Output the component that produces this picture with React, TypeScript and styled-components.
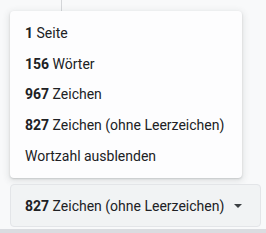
import React from 'react';
import styled, { createGlobalStyle } from 'styled-components';

const GlobalStyle = createGlobalStyle`
  html, body {
    margin: 0;
    padding: 0;
    background: #f8f9fa;
    font-family: Roboto, 'Liberation Sans', sans-serif;
  }
`;

const counts = [
  { num: '1', label: 'Seite' },
  { num: '156', label: 'Wörter' },
  { num: '967', label: 'Zeichen' },
  { num: '827', label: 'Zeichen (ohne Leerzeichen)' },
];

export default function App() {
  return (
    <>
      <GlobalStyle />
      <Page>
        <Divider />
        <Menu>
          {counts.map((c) => (
            <MenuItem key={c.label}>
              <span>
                <Num>{c.num}</Num>
                {' ' + c.label}
              </span>
            </MenuItem>
          ))}
          <MenuItem>
            <span>Wortzahl ausblenden</span>
          </MenuItem>
        </Menu>
        <Selector>
          <span>
            <Num>827</Num>
            {' Zeichen (ohne Leerzeichen)'}
          </span>
          <svg width="8" height="4" viewBox="0 0 8 4">
            <path d="M0 0 L8 0 L4 4 Z" fill="#3c4043" />
          </svg>
        </Selector>
        <BottomBar />
      </Page>
    </>
  );
}

const Page = styled.div`
  width: 266px;
  height: 233px;
  display: flex;
  flex-direction: column;
  overflow: hidden;
`;

const Divider = styled.div`
  width: 1px;
  height: 11px;
  margin-left: 61px;
  background: #d4d6d9;
`;

const Menu = styled.div`
  width: 232px;
  height: 167px;
  margin-left: 10px;
  box-sizing: border-box;
  padding: 7px 0;
  background: #fdfdfe;
  border-radius: 4px;
  box-shadow: 0 1px 2px rgba(60, 64, 67, 0.2), 0 2px 6px 2px rgba(60, 64, 67, 0.1);
  display: flex;
  flex-direction: column;
`;

const MenuItem = styled.div`
  height: 31px;
  display: flex;
  align-items: center;
  padding-left: 15px;
  font-size: 14px;
  color: #202124;
  white-space: pre;
`;

const Num = styled.b`
  font-weight: 700;
`;

const Selector = styled.div`
  margin: 6px 0 0 10px;
  width: 251px;
  height: 43px;
  box-sizing: border-box;
  padding: 0 18px 0 14px;
  display: flex;
  align-items: center;
  justify-content: space-between;
  background: #f1f3f4;
  border: 1px solid #e3e5e8;
  border-radius: 4px;
  font-size: 14px;
  color: #202124;
  white-space: pre;
`;

const BottomBar = styled.div`
  margin-top: auto;
  height: 4px;
  background: #dadce0;
`;
